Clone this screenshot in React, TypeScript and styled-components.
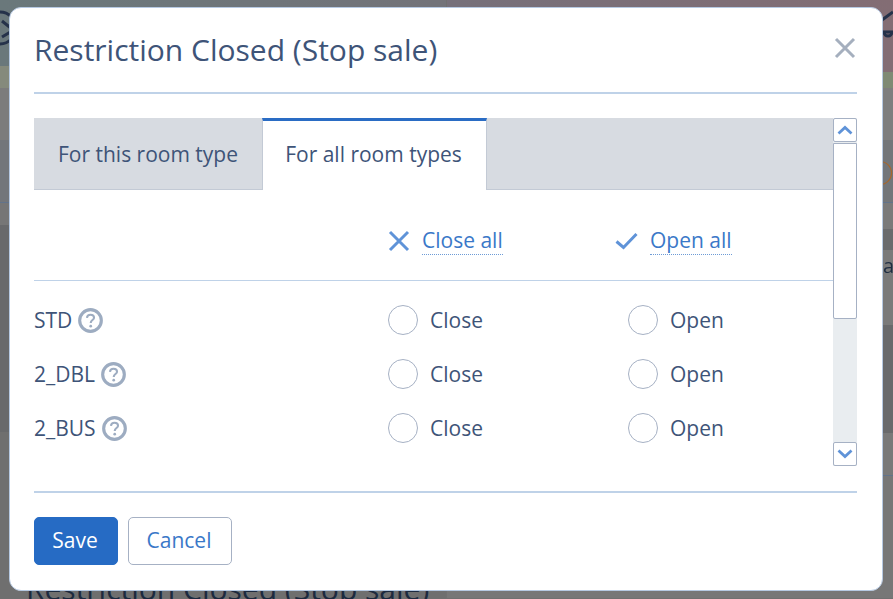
import React from 'react'
import styled, { createGlobalStyle } from 'styled-components'

const textColor = '#3e5478'
const linkColor = '#3a78c8'
const lineColor = '#bfd2e8'

const GlobalStyle = createGlobalStyle`
  html, body {
    margin: 0;
    padding: 0;
    height: 100%;
    overflow: hidden;
    background: #707070;
    font-family: "Open Sans", "Liberation Sans", sans-serif;
  }
`

const Screen = styled.div`
  position: relative;
  width: 893px;
  height: 599px;
  overflow: hidden;
`

const PageBehind = styled.div`
  display: flex;
  justify-content: space-between;
  height: 599px;
  filter: blur(0.6px);
`

const PageColumn = styled.div`
  display: flex;
  flex-direction: column;
  width: 446px;
`

const Band = styled.div<{ $h: number; $bg: string; $line?: boolean }>`
  position: relative;
  height: ${(p) => p.$h}px;
  background: ${(p) => p.$bg};
  box-sizing: border-box;
  ${(p) => (p.$line ? 'border-bottom: 1px solid #62738a;' : '')}
`

const BackLetter = styled.span`
  position: absolute;
  right: -1px;
  top: 2px;
  font-size: 20px;
  line-height: 28px;
  color: #1f2d42;
`

const BackTitle = styled.div`
  position: absolute;
  left: 26px;
  top: 569px;
  font-size: 30px;
  line-height: 40px;
  white-space: nowrap;
  color: #1c2a3f;
`

const BackIcon = styled.svg<{ $x: number; $y: number }>`
  position: absolute;
  left: ${(p) => p.$x}px;
  top: ${(p) => p.$y}px;
`

const Dialog = styled.div`
  position: absolute;
  left: 9px;
  top: 7px;
  width: 874px;
  height: 584px;
  box-sizing: border-box;
  padding: 0 25px 0 24px;
  display: flex;
  flex-direction: column;
  background: #fff;
  border: 1px solid #b6c9e2;
  border-radius: 12px;
`

const Header = styled.div`
  display: flex;
  align-items: center;
  justify-content: space-between;
  height: 84px;
  flex: none;
  border-bottom: 2px solid ${lineColor};
  margin-bottom: 24px;
  box-sizing: content-box;
`

const Title = styled.h1`
  margin: 0;
  font-size: 30px;
  line-height: 40px;
  font-weight: 400;
  color: ${textColor};
`

const CloseButton = styled.button`
  display: flex;
  width: 22px;
  height: 22px;
  padding: 0;
  margin: 0 1px 4px 0;
  border: 0;
  background: none;
`

const Body = styled.div`
  display: flex;
  height: 348px;
  flex: none;
`

const Content = styled.div`
  flex: 1;
  min-width: 0;
`

const TabStrip = styled.div`
  display: flex;
  height: 72px;
  background: #d7dbe1;
  border-bottom: 1px solid #c3cad5;
  box-sizing: border-box;
`

const Tab = styled.div<{ $active?: boolean }>`
  display: flex;
  align-items: center;
  justify-content: center;
  box-sizing: border-box;
  height: 72px;
  width: ${(p) => (p.$active ? '225px' : '228px')};
  font-size: 21px;
  color: ${textColor};
  background: ${(p) => (p.$active ? '#fff' : 'transparent')};
  ${(p) =>
    p.$active
      ? `border-top: 3px solid #2a6cc4;
         border-left: 1px solid #c3cad5;
         border-right: 1px solid #c3cad5;
         padding: 0 2px 4px 0;`
      : 'padding-bottom: 1px;'}
`

const ActionsRow = styled.div`
  display: grid;
  grid-template-columns: 354px 227px 1fr;
  align-items: center;
  height: 91px;
  box-sizing: border-box;
  padding-top: 12px;
  border-bottom: 1px solid ${lineColor};
`

const ActionItem = styled.div`
  display: flex;
  align-items: center;
  gap: 12px;
`

const ActionLink = styled.a`
  font-size: 21px;
  line-height: 27px;
  color: ${linkColor};
  border-bottom: 1px dotted #6d9bd6;
`

const RoomRows = styled.div`
  padding-top: 12px;
`

const RoomRow = styled.div`
  display: grid;
  grid-template-columns: 354px 240px 1fr;
  align-items: center;
  height: 54px;
`

const RoomName = styled.div`
  display: flex;
  align-items: center;
  gap: 6px;
  font-size: 21px;
  color: ${textColor};
`

const RadioLabel = styled.label`
  display: flex;
  align-items: center;
  gap: 12px;
  font-size: 21px;
  color: ${textColor};
`

const RadioCircle = styled.span`
  display: block;
  width: 30px;
  height: 30px;
  box-sizing: border-box;
  border: 1px solid #a6b1c4;
  border-radius: 50%;
  background: #fff;
`

const Scrollbar = styled.div`
  display: flex;
  flex-direction: column;
  flex: none;
  width: 24px;
  background: #e9edf0;
`

const ScrollButton = styled.div`
  display: flex;
  align-items: center;
  justify-content: center;
  flex: none;
  width: 24px;
  height: 24px;
  box-sizing: border-box;
  background: #fff;
  border: 1px solid #a6b1c4;
  border-radius: 2px;
`

const ScrollThumb = styled.div`
  flex: none;
  height: 176px;
  margin-top: 1px;
  box-sizing: border-box;
  background: #fff;
  border: 1px solid #a6b1c4;
  border-radius: 0 0 2px 2px;
`

const ScrollTrack = styled.div`
  flex: 1;
`

const Footer = styled.div`
  display: flex;
  gap: 10px;
  margin-top: 25px;
  padding-top: 24px;
  border-top: 2px solid ${lineColor};
`

const Button = styled.button<{ $primary?: boolean }>`
  height: 48px;
  width: ${(p) => (p.$primary ? '84px' : '104px')};
  padding: 0 2px 2px 0;
  box-sizing: border-box;
  font-family: inherit;
  font-size: 21px;
  border-radius: 5px;
  color: ${(p) => (p.$primary ? '#fff' : linkColor)};
  background: ${(p) => (p.$primary ? '#266bc4' : '#fff')};
  border: 1px solid ${(p) => (p.$primary ? '#266bc4' : '#a6b1c4')};
`

const CrossIcon = ({ size, color }: { size: number; color: string }) => (
  <svg width={size} height={size} viewBox="0 0 22 22" fill="none">
    <path d="M2 2 L20 20 M20 2 L2 20" stroke={color} strokeWidth="3" />
  </svg>
)

const CheckIcon = () => (
  <svg width="23" height="18" viewBox="0 0 23 18" fill="none">
    <path d="M1.5 9.5 L8.5 15.5 L21.5 2" stroke="#5f93d8" strokeWidth="3" />
  </svg>
)

const HelpIcon = () => (
  <svg width="25" height="25" viewBox="0 0 24 24" fill="none">
    <circle cx="12" cy="12" r="10.4" stroke="#9dacc1" strokeWidth="3" />
    <path
      d="M8.6 9.4 C8.8 7.4 10.2 6.5 12 6.5 C14 6.5 15.4 7.7 15.4 9.3 C15.4 11.6 12.2 11.6 12.2 14.4"
      stroke="#9dacc1"
      strokeWidth="2"
    />
    <circle cx="12.2" cy="17.4" r="1.3" fill="#9dacc1" />
  </svg>
)

const Chevron = ({ up }: { up?: boolean }) => (
  <svg width="16" height="10" viewBox="0 0 16 10" fill="none">
    <path d={up ? 'M1.5 8.5 L8 2.5 L14.5 8.5' : 'M1.5 1.5 L8 7.5 L14.5 1.5'} stroke="#5f93d8" strokeWidth="2.8" />
  </svg>
)

const rooms = ['STD', '2_DBL', '2_BUS']

const App = () => {
  return (
    <Screen>
      <GlobalStyle />
      <PageBehind>
        <PageColumn>
          <Band $h={66} $bg="linear-gradient(to right, #6a787b, #737379)" />
          <Band $h={22} $bg="#858a7c" />
          <Band $h={52} $bg="#7c7c7c" />
          <Band $h={63} $bg="#73767a" $line />
          <Band $h={22} $bg="#767676" />
          <Band $h={207} $bg="#68696b" />
          <Band $h={167} $bg="#6f6f6f" />
        </PageColumn>
        <PageColumn>
          <Band $h={72} $bg="linear-gradient(to right, #76707a, #836d74)" />
          <Band $h={16} $bg="#7f8a74" />
          <Band $h={52} $bg="#7e7e7e" />
          <Band $h={63} $bg="#73767a" $line />
          <Band $h={26} $bg="#7a7a7a" />
          <Band $h={21} $bg="#6a6b6d" />
          <Band $h={75} $bg="#7a7a7a">
            <BackLetter>a</BackLetter>
          </Band>
          <Band $h={108} $bg="#696a6c" />
          <Band $h={43} $bg="#797979" $line />
          <Band $h={122} $bg="#777777" />
        </PageColumn>
      </PageBehind>
      <BackTitle>Restriction Closed (Stop sale)</BackTitle>
      <BackIcon $x={-14} $y={9} width="36" height="38" viewBox="0 0 36 38" fill="none">
        <circle cx="14" cy="19" r="16" stroke="#25324a" strokeWidth="3" />
        <path d="M16 12 L26 20 M16 28 L26 22" stroke="#25324a" strokeWidth="3" />
      </BackIcon>
      <BackIcon $x={880} $y={8} width="13" height="40" viewBox="0 0 13 40" fill="none">
        <path d="M2 12 L13 4 M0 24 H13 M4 24 a4 4 0 0 0 8 0" stroke="#25324a" strokeWidth="3" />
      </BackIcon>
      <BackIcon $x={880} $y={160} width="13" height="26" viewBox="0 0 13 26" fill="none">
        <circle cx="0" cy="13" r="11.5" stroke="#a8672b" strokeWidth="1.2" />
      </BackIcon>

      <Dialog>
        <Header>
          <Title>Restriction Closed (Stop sale)</Title>
          <CloseButton>
            <CrossIcon size={22} color="#a5afbe" />
          </CloseButton>
        </Header>
        <Body>
          <Content>
            <TabStrip>
              <Tab>For this room type</Tab>
              <Tab $active>For all room types</Tab>
            </TabStrip>
            <ActionsRow>
              <span />
              <ActionItem>
                <CrossIcon size={22} color="#5f93d8" />
                <ActionLink>Close all</ActionLink>
              </ActionItem>
              <ActionItem>
                <CheckIcon />
                <ActionLink>Open all</ActionLink>
              </ActionItem>
            </ActionsRow>
            <RoomRows>
              {rooms.map((room) => (
                <RoomRow key={room}>
                  <RoomName>
                    {room}
                    <HelpIcon />
                  </RoomName>
                  <RadioLabel>
                    <RadioCircle />
                    Close
                  </RadioLabel>
                  <RadioLabel>
                    <RadioCircle />
                    Open
                  </RadioLabel>
                </RoomRow>
              ))}
            </RoomRows>
          </Content>
          <Scrollbar>
            <ScrollButton>
              <Chevron up />
            </ScrollButton>
            <ScrollThumb />
            <ScrollTrack />
            <ScrollButton>
              <Chevron />
            </ScrollButton>
          </Scrollbar>
        </Body>
        <Footer>
          <Button $primary>Save</Button>
          <Button>Cancel</Button>
        </Footer>
      </Dialog>
    </Screen>
  )
}

export default App
